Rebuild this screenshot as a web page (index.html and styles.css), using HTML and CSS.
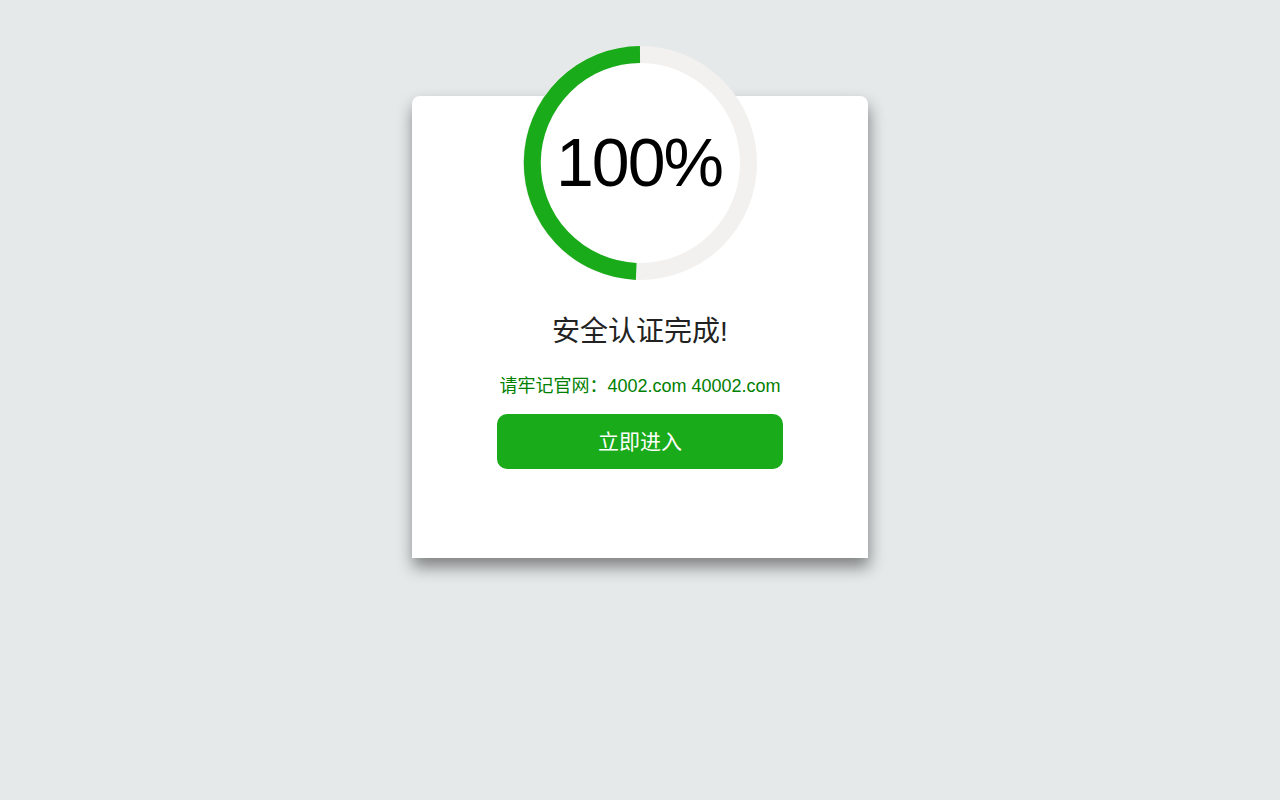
FILE: index.html
```html
<!DOCTYPE html>
<html lang="zh-CN">
<head>
    <meta charset="UTF-8">
    <meta name="viewport" content="width=device-width, initial-scale=1.0">
    <title>安全认证</title>
    <link rel="stylesheet" href="styles.css">
</head>
<body>
    <div class="card">
        <div class="progress">
            <svg width="234" height="234" viewBox="0 0 234 234">
                <circle cx="117" cy="117" r="108.5" fill="#fff" stroke="#f2f1ef" stroke-width="17"/>
                <path d="M117 8.5 A108.5 108.5 0 0 0 113.2 225.4" fill="none" stroke="#1aab1a" stroke-width="17"/>
            </svg>
            <span class="percent">100%</span>
        </div>
        <h2 class="title">安全认证完成!</h2>
        <p class="site">请牢记官网：4002.com 40002.com</p>
        <button class="enter" type="button">立即进入</button>
    </div>
</body>
</html>
```

FILE: styles.css
```css
html {
    background-color: #e5e9ea;
}

body {
    margin: 0;
    padding: 96px 0 60px;
    min-height: 100vh;
    box-sizing: border-box;
    background-color: #e5e9ea;
    font-family: "Liberation Sans", Arial, "Noto Sans CJK SC", sans-serif;
}

.card {
    width: 456px;
    height: 462px;
    box-sizing: border-box;
    margin: 0 auto;
    background: #fff;
    border-radius: 8px 8px 0 0;
    box-shadow: 1px 9px 16px rgba(0, 0, 0, 0.45);
    display: flex;
    flex-direction: column;
    align-items: center;
}

.progress {
    position: relative;
    width: 234px;
    height: 234px;
    margin-top: -50px;
}

.progress svg {
    display: block;
}

.percent {
    position: absolute;
    left: 0;
    right: 0;
    top: 80px;
    text-align: center;
    font-size: 68px;
    line-height: 72px;
    letter-spacing: -2px;
    text-indent: -2px;
    color: #000;
}

.title {
    margin: 34px 0 0;
    font-size: 28px;
    line-height: 36px;
    font-weight: normal;
    color: #222;
}

.site {
    margin: 24px 0 0;
    font-size: 18px;
    line-height: 24px;
    color: #008000;
}

.enter {
    margin-top: 16px;
    width: 286px;
    height: 55px;
    padding: 0 0 4px;
    border: none;
    border-radius: 10px;
    background: #1aab1a;
    color: #fff;
    font-family: "Liberation Sans", "Noto Sans CJK SC", sans-serif;
    font-size: 21px;
    cursor: pointer;
}
```
